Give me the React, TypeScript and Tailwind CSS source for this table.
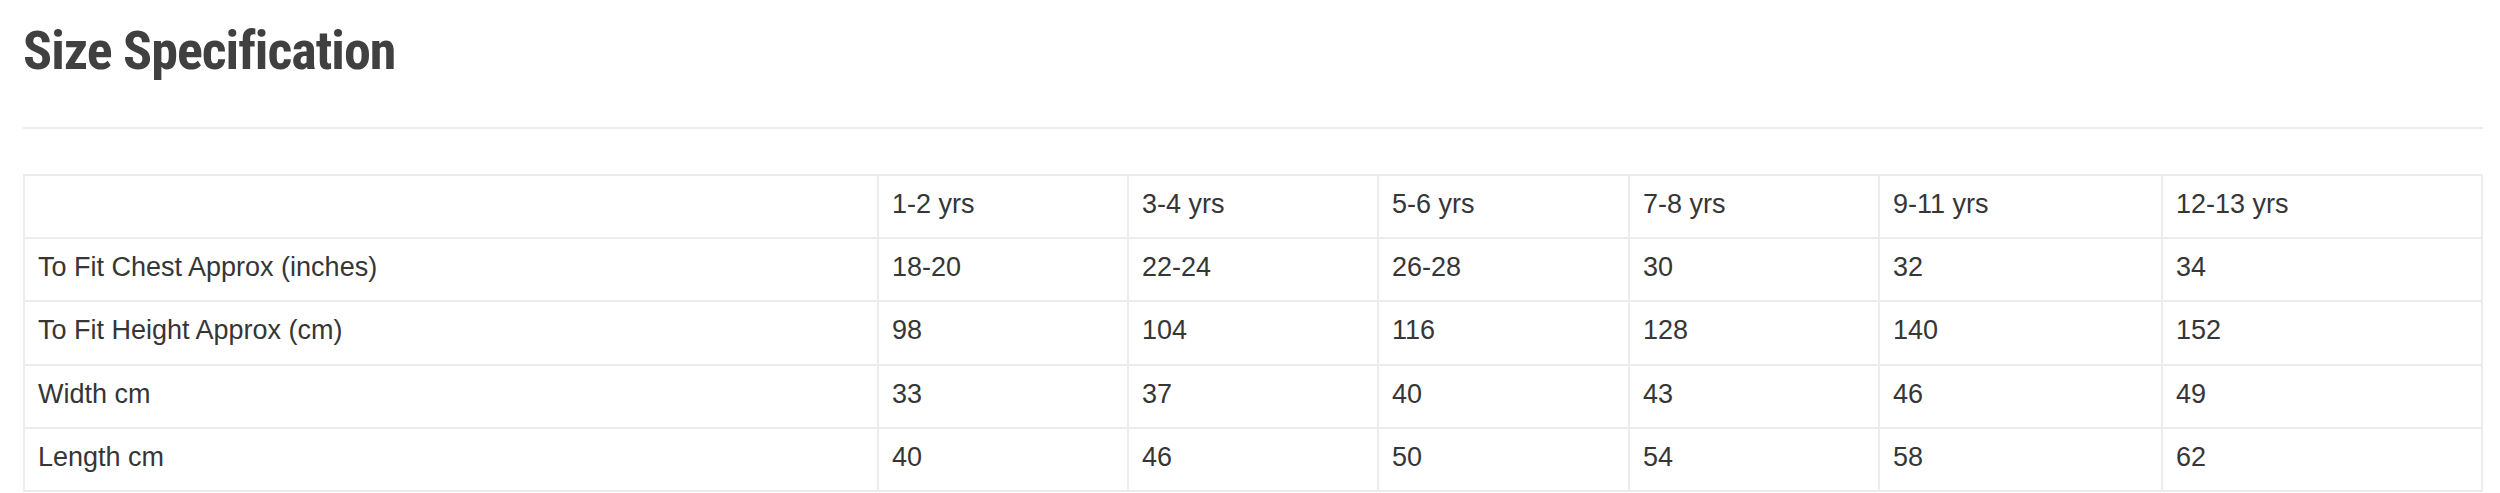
import React from "react";

const headers = ["", "1-2 yrs", "3-4 yrs", "5-6 yrs", "7-8 yrs", "9-11 yrs", "12-13 yrs"];
const rows: string[][] = [
  ["To Fit Chest Approx (inches)", "18-20", "22-24", "26-28", "30", "32", "34"],
  ["To Fit Height Approx (cm)", "98", "104", "116", "128", "140", "152"],
  ["Width cm", "33", "37", "40", "43", "46", "49"],
  ["Length cm", "40", "46", "50", "54", "58", "62"],
];
const rowHeights = ["h-[61px]", "h-[61px]", "h-[62px]", "h-[61px]", "h-[61px]"];

export default function App() {
  const all = [headers, ...rows];
  return (
    <div className="w-[2500px] h-[493px] bg-white overflow-hidden pl-[23px] pr-[17px] pt-[24px]">
      <h1
        className="text-[54px] leading-[54px] font-bold tracking-[-1px] text-[#404040] m-0"
        style={{ fontFamily: '"Liberation Sans Narrow", "Roboto Condensed", "DejaVu Sans Condensed", "Liberation Sans", sans-serif' }}
      >
        Size Specification
      </h1>
      <div className="mt-[49px] h-[2px] bg-[#ececec]" />
      <div
        className="mt-[45px] grid grid-cols-[852px_248px_248px_249px_248px_281px_318px] gap-[2px] bg-[#ececec] border-2 border-[#ececec] w-fit text-[27px] leading-[30px] text-[#363636]"
        style={{ fontFamily: '"Liberation Sans", Arial, sans-serif' }}
      >
        {all.map((r, ri) =>
          r.map((c, ci) => (
            <div key={`${ri}-${ci}`} className={`bg-white pl-[13px] pt-[13px] ${rowHeights[ri]}`}>
              {c}
            </div>
          ))
        )}
      </div>
    </div>
  );
}
